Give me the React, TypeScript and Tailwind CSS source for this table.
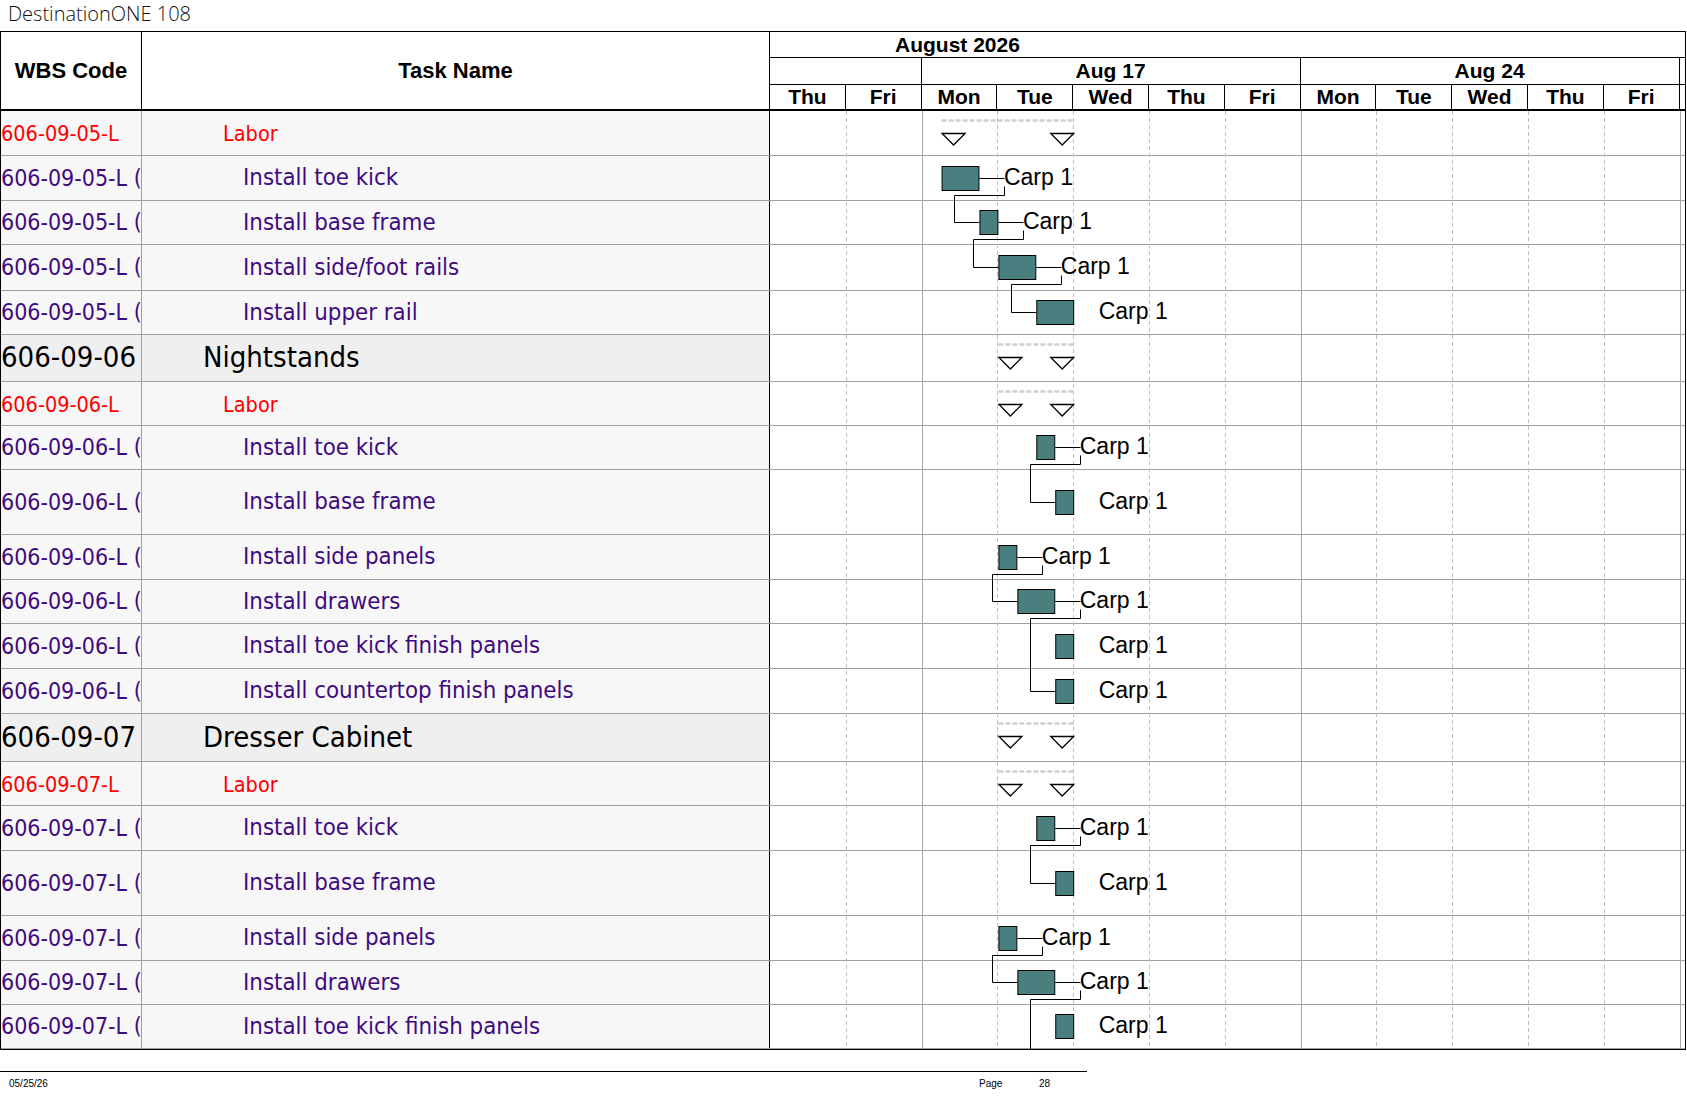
import React from 'react';

// one day column in the gantt grid
const DAY = 75.8;
const X = (d: number) => d * DAY;

type Kind = 'group' | 'labor' | 'task';

interface Row {
  kind: Kind;
  wbs: string;
  name: string;
  h: number;
  bar?: [number, number];
  sum?: [number, number];
}

const rows: Row[] = [
  { kind: 'labor', wbs: '606-09-05-L', name: 'Labor', h: 45, sum: [2.25, 4] },
  { kind: 'task', wbs: '606-09-05-L (01)', name: 'Install toe kick', h: 45, bar: [2.25, 2.75] },
  { kind: 'task', wbs: '606-09-05-L (02)', name: 'Install base frame', h: 44, bar: [2.75, 3] },
  { kind: 'task', wbs: '606-09-05-L (03)', name: 'Install side/foot rails', h: 46, bar: [3, 3.5] },
  { kind: 'task', wbs: '606-09-05-L (04)', name: 'Install upper rail', h: 44, bar: [3.5, 4] },
  { kind: 'group', wbs: '606-09-06', name: 'Nightstands', h: 47, sum: [3, 4] },
  { kind: 'labor', wbs: '606-09-06-L', name: 'Labor', h: 44, sum: [3, 4] },
  { kind: 'task', wbs: '606-09-06-L (01)', name: 'Install toe kick', h: 44, bar: [3.5, 3.75] },
  { kind: 'task', wbs: '606-09-06-L (02)', name: 'Install base frame', h: 65, bar: [3.75, 4] },
  { kind: 'task', wbs: '606-09-06-L (03)', name: 'Install side panels', h: 45, bar: [3, 3.25] },
  { kind: 'task', wbs: '606-09-06-L (04)', name: 'Install drawers', h: 44, bar: [3.25, 3.75] },
  { kind: 'task', wbs: '606-09-06-L (05)', name: 'Install toe kick finish panels', h: 45, bar: [3.75, 4] },
  { kind: 'task', wbs: '606-09-06-L (06)', name: 'Install countertop finish panels', h: 45, bar: [3.75, 4] },
  { kind: 'group', wbs: '606-09-07', name: 'Dresser Cabinet', h: 48, sum: [3, 4] },
  { kind: 'labor', wbs: '606-09-07-L', name: 'Labor', h: 44, sum: [3, 4] },
  { kind: 'task', wbs: '606-09-07-L (01)', name: 'Install toe kick', h: 45, bar: [3.5, 3.75] },
  { kind: 'task', wbs: '606-09-07-L (02)', name: 'Install base frame', h: 65, bar: [3.75, 4] },
  { kind: 'task', wbs: '606-09-07-L (03)', name: 'Install side panels', h: 45, bar: [3, 3.25] },
  { kind: 'task', wbs: '606-09-07-L (04)', name: 'Install drawers', h: 44, bar: [3.25, 3.75] },
  { kind: 'task', wbs: '606-09-07-L (05)', name: 'Install toe kick finish panels', h: 44, bar: [3.75, 4] },
];

// predecessor -> successor; null = successor is on the next page
const links: [number, number | null][] = [
  [1, 2], [2, 3], [3, 4],
  [7, 8], [9, 10], [10, 12],
  [15, 16], [17, 18], [18, null],
];

const days = ['Thu', 'Fri', 'Mon', 'Tue', 'Wed', 'Thu', 'Fri', 'Mon', 'Tue', 'Wed', 'Thu', 'Fri'];

const H: Record<number, string> = {
  44: 'h-[44px]',
  45: 'h-[45px]',
  46: 'h-[46px]',
  47: 'h-[47px]',
  48: 'h-[48px]',
  65: 'h-[65px]',
};

const tops: number[] = [];
rows.forEach((r, i) => tops.push(i === 0 ? 0 : tops[i - 1] + rows[i - 1].h));
const total = rows.reduce((s, r) => s + r.h, 0);
const mid = (i: number) => Math.floor(tops[i] + (rows[i].h - 1) / 2) + 0.5;

const dataFont = "font-['DejaVu_Sans_Condensed','Liberation_Sans',sans-serif]";
const headFont = "font-['Liberation_Sans',Arial,sans-serif] font-bold text-[21px] text-black";

function WbsCell({ r }: { r: Row }) {
  const style =
    r.kind === 'group'
      ? 'text-[29px] text-black bg-[#efefef]'
      : r.kind === 'labor'
      ? 'pt-[3px] text-[21.5px] text-[#ff0000] bg-[#f7f7f7]'
      : 'text-[23px] text-[#3f0a80] bg-[#f7f7f7]';
  return (
    <div className={`w-[141px] shrink-0 border-r border-[#a0a0a0] flex items-center overflow-hidden whitespace-nowrap ${dataFont} ${style}`}>
      {r.wbs}
    </div>
  );
}

function NameCell({ r }: { r: Row }) {
  const style =
    r.kind === 'group'
      ? 'pl-[61px] text-[29px] text-black bg-[#efefef]'
      : r.kind === 'labor'
      ? 'pl-[81px] pt-[3px] text-[21.5px] text-[#ff0000] bg-[#f7f7f7]'
      : 'pl-[101px] text-[23.8px] text-[#3f0a80] bg-[#f7f7f7]';
  return (
    <div className={`w-[628px] shrink-0 border-r border-black flex items-center whitespace-nowrap ${dataFont} ${style}`}>
      {r.name}
    </div>
  );
}

function GanttChart() {
  return (
    <svg width={915} height={total} className="absolute left-[770px] top-0">
      {days.map((_, k) => {
        const x = Math.round(X(k + 1)) - 0.5;
        const week = k === 1 || k === 6 || k === 11;
        return (
          <line
            key={k}
            x1={x}
            x2={x}
            y1={0}
            y2={total}
            stroke={week ? '#a8a8a8' : '#c0c0c0'}
            strokeWidth={1}
            strokeDasharray={week ? undefined : '4 3'}
          />
        );
      })}

      {rows.map((r, i) => {
        if (!r.sum) return null;
        const s = X(r.sum[0]);
        const e = X(r.sum[1]);
        const t = tops[i];
        return (
          <g key={'s' + i}>
            <line x1={s} x2={e} y1={t + 9.5} y2={t + 9.5} stroke="#d0d0d0" strokeWidth={2.5} strokeDasharray="5 2" />
            <polygon points={`${s + 0.5},${t + 22.5} ${s + 23.5},${t + 22.5} ${s + 12},${t + 34}`} fill="white" stroke="black" strokeWidth={1.3} />
            <polygon points={`${e - 23.5},${t + 22.5} ${e - 0.5},${t + 22.5} ${e - 12},${t + 34}`} fill="white" stroke="black" strokeWidth={1.3} />
          </g>
        );
      })}

      {links.map(([a, b], n) => {
        const ra = rows[a];
        const ya = mid(a);
        const ax = X(ra.bar![1]);
        const lx = Math.round(ax + 25) + 0.5;
        const bs = b === null ? 3.75 : rows[b].bar![0];
        const ex = Math.round(X(bs) - 25) + 0.5;
        const yb = b === null ? total : mid(b);
        const d =
          `M ${ax} ${ya} H ${lx} M ${lx} ${ya + 8} V ${ya + 17} H ${ex} V ${yb}` +
          (b === null ? '' : ` H ${X(bs)}`);
        return <path key={'l' + n} d={d} fill="none" stroke="black" strokeWidth={1} />;
      })}

      {rows.map((r, i) => {
        if (!r.bar) return null;
        const s = X(r.bar[0]);
        const e = X(r.bar[1]);
        const c = mid(i);
        return (
          <g key={'b' + i}>
            <rect x={s + 0.5} y={c - 12} width={e - s - 1} height={24} fill="#4a7f7f" stroke="black" strokeWidth={1} />
            <text x={e + 24.5} y={c + 6.8} fontSize={23} fontFamily="'Liberation Sans', Arial, sans-serif" fill="black">
              Carp 1
            </text>
          </g>
        );
      })}
    </svg>
  );
}

export default function App() {
  return (
    <div className="w-[1687px] h-[1097px] bg-white overflow-hidden">
      <div className="h-[31px] pl-[8px] pt-[4px] text-[20px] leading-[20px] font-light text-[#111] font-['Open_Sans','Liberation_Sans',sans-serif]">
        DestinationONE 108
      </div>

      <div className="w-[1686px] border border-black">
        {/* header */}
        <div className="flex h-[79px] border-b-2 border-black bg-white">
          <div className={`w-[141px] shrink-0 border-r border-black flex items-center justify-center ${headFont} text-[22px]`}>
            WBS Code
          </div>
          <div className={`w-[628px] shrink-0 border-r border-black flex items-center justify-center ${headFont} text-[22px]`}>
            Task Name
          </div>
          <div className={`flex-1 flex flex-col leading-[24px] ${headFont}`}>
            <div className="h-[26px] shrink-0 border-b border-black flex items-center pl-[125px]">August 2026</div>
            <div className="h-[27px] shrink-0 border-b border-black flex">
              <div className="w-[151.6px] shrink-0 border-r border-black" />
              <div className="w-[379px] shrink-0 border-r border-black flex items-center justify-center">Aug 17</div>
              <div className="w-[379px] shrink-0 border-r border-black flex items-center justify-center">Aug 24</div>
            </div>
            <div className="h-[24px] shrink-0 flex">
              {days.map((d, k) => (
                <div key={k} className="w-[75.8px] shrink-0 border-r border-black flex items-center justify-center">
                  {d}
                </div>
              ))}
            </div>
          </div>
        </div>

        {/* rows */}
        <div className="relative">
          {rows.map((r, i) => (
            <div key={i} className={`flex border-b border-[#a0a0a0] ${H[r.h]}`}>
              <WbsCell r={r} />
              <NameCell r={r} />
              <div className="flex-1 bg-white" />
            </div>
          ))}
          <GanttChart />
        </div>
      </div>

      <div className="mt-[21px] w-[1087px] border-t border-black flex pt-[7px] pl-[9px] text-[10px] leading-[10px] text-black font-['Liberation_Sans',Arial,sans-serif]">
        <span className="w-[970px] shrink-0">05/25/26</span>
        <span className="w-[60px] shrink-0">Page</span>
        <span>28</span>
      </div>
    </div>
  );
}
